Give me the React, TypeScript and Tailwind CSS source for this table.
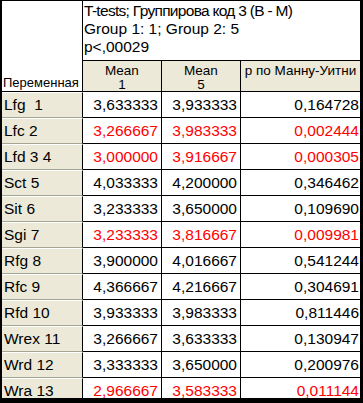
const rows: { name: string; m1: string; m5: string; p: string; sig?: boolean }[] = [
  { name: "Lfg  1", m1: "3,633333", m5: "3,933333", p: "0,164728" },
  { name: "Lfc 2", m1: "3,266667", m5: "3,983333", p: "0,002444", sig: true },
  { name: "Lfd 3 4", m1: "3,000000", m5: "3,916667", p: "0,000305", sig: true },
  { name: "Sct 5", m1: "4,033333", m5: "4,200000", p: "0,346462" },
  { name: "Sit 6", m1: "3,233333", m5: "3,650000", p: "0,109690" },
  { name: "Sgi 7", m1: "3,233333", m5: "3,816667", p: "0,009981", sig: true },
  { name: "Rfg 8", m1: "3,900000", m5: "4,016667", p: "0,541244" },
  { name: "Rfc 9", m1: "4,366667", m5: "4,216667", p: "0,304691" },
  { name: "Rfd 10", m1: "3,933333", m5: "3,983333", p: "0,811446" },
  { name: "Wrex 11", m1: "3,266667", m5: "3,633333", p: "0,130947" },
  { name: "Wrd 12", m1: "3,333333", m5: "3,650000", p: "0,200976" },
  { name: "Wra 13", m1: "2,966667", m5: "3,583333", p: "0,011144", sig: true },
];

export default function App() {
  return (
    <div className="w-[363px] h-[403px] bg-black pl-[2px] pt-[1px] font-['Liberation_Sans',Arial,sans-serif] text-black">
      <div className="w-[358px] h-[397px] bg-white overflow-hidden">
        {/* header */}
        <div className="flex">
          <div className="w-[81px] h-[91px] border-r border-b border-black flex items-end pl-[1px] pb-[1px] text-[13px] leading-[15px]">
            Переменная
          </div>
          <div className="flex flex-col">
            <div className="w-[277px] h-[60px] border-b border-black pl-[1px] pt-[1px] text-[15.5px] leading-[18px]">
              <div className="tracking-[-0.7px]">T-tests; Группирова код 3 (B - M)</div>
              <div>Group 1: 1; Group 2: 5</div>
              <div>p&lt;,00029</div>
            </div>
            <div className="flex h-[31px] border-b border-black bg-[#ECE9D8] text-[13.5px] leading-[14px]">
              <div className="w-[79px] border-r border-black text-center pt-[3px]">
                Mean
                <br />1
              </div>
              <div className="w-[79px] border-r border-black text-center pt-[3px]">
                Mean
                <br />5
              </div>
              <div className="w-[119px] text-center pt-[3px]">p по Манну-Уитни</div>
            </div>
          </div>
        </div>
        {/* data */}
        {rows.map((r) => (
          <div key={r.name} className="flex h-[26px] text-[15.5px] leading-[24px]">
            <div className="w-[81px] border-r border-black bg-[#ECE9D8] border-t border-t-white border-b border-b-[#a5a596] pl-[2px] whitespace-pre">
              {r.name}
            </div>
            <div className={`flex flex-1 border-b border-black ${r.sig ? "text-[#ff0000]" : ""}`}>
              <div className="w-[79px] border-r border-black text-right pr-[3px] pt-[1px]">{r.m1}</div>
              <div className="w-[79px] border-r border-black text-right pr-[3px] pt-[1px]">{r.m5}</div>
              <div className="w-[119px] text-right pr-[1px] pt-[1px]">{r.p}</div>
            </div>
          </div>
        ))}
      </div>
    </div>
  );
}
